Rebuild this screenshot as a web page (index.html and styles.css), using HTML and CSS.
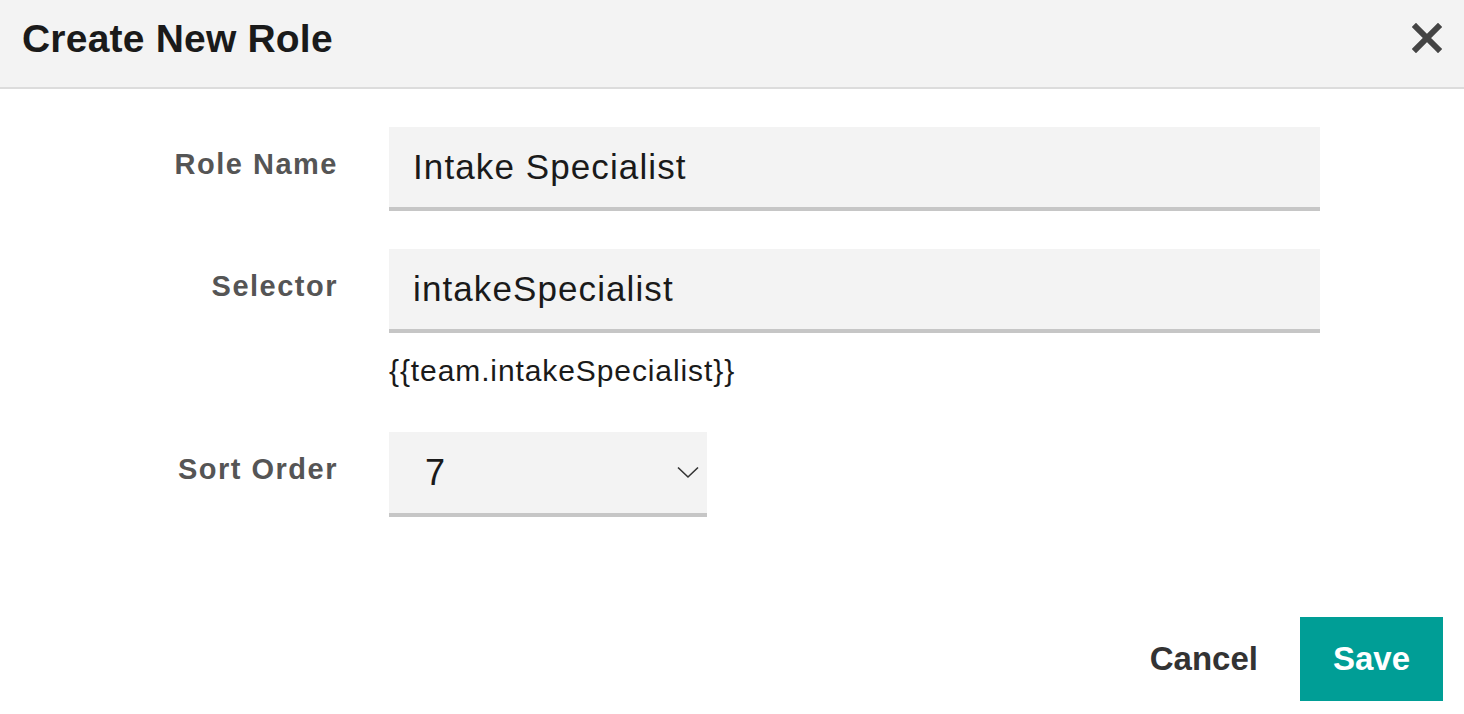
FILE: index.html
```html
<!DOCTYPE html>
<html>
<head>
<meta charset="utf-8">
<link rel="stylesheet" href="styles.css">
</head>
<body>
<div class="dialog">
  <header class="header">
    <h1 class="title">Create New Role</h1>
    <button class="close" aria-label="Close">
      <svg width="30" height="30" viewBox="0 0 30 30"><path d="M4 4 L26 26 M26 4 L4 26" stroke="#444" stroke-width="6" stroke-linecap="square" fill="none"/></svg>
    </button>
  </header>
  <form class="form">
    <label class="label">Role Name</label>
    <div class="field"><input class="input" type="text" value="Intake Specialist"></div>
    <label class="label">Selector</label>
    <div class="field">
      <input class="input" type="text" value="intakeSpecialist">
      <div class="helper">{{team.intakeSpecialist}}</div>
    </div>
    <label class="label">Sort Order</label>
    <div class="field">
      <div class="select">
        <span class="select-value">7</span>
        <svg class="chevron" width="22" height="13" viewBox="0 0 22 13"><path d="M1 1.5 L11 11 L21 1.5" stroke="#333" stroke-width="1.6" fill="none"/></svg>
      </div>
    </div>
  </form>
  <footer class="footer">
    <button class="btn-cancel" type="button">Cancel</button>
    <button class="btn-save" type="button">Save</button>
  </footer>
</div>
</body>
</html>
```
FILE: styles.css
```css
* { box-sizing: border-box; }
html, body { margin: 0; padding: 0; background: #fff; }
body {
  font-family: "Liberation Sans", Arial, Helvetica, sans-serif;
  color: #1a1a1a;
  width: 1464px;
  height: 714px;
  overflow: hidden;
}
.header {
  height: 89px;
  background: #f3f3f3;
  border-bottom: 2px solid #dcdcdc;
  display: flex;
  justify-content: space-between;
  align-items: flex-start;
  padding: 16px 22px 0 22px;
}
.title {
  margin: 0;
  font-size: 39px;
  line-height: 45px;
  font-weight: bold;
  letter-spacing: 0.2px;
  color: #1a1a1a;
}
.close {
  border: 0;
  background: transparent;
  padding: 0;
  margin-top: 7px;
  margin-right: 0;
  width: 30px;
  height: 30px;
  display: block;
  cursor: pointer;
}
.close svg { display: block; }
.form {
  display: grid;
  grid-template-columns: 338px 931px;
  column-gap: 51px;
  row-gap: 38px;
  margin-top: 38px;
}
.label {
  text-align: right;
  font-size: 29px;
  line-height: 36px;
  font-weight: bold;
  color: #555;
  letter-spacing: 1.5px;
  padding-top: 19px;
}
.field { display: flex; flex-direction: column; align-items: flex-start; }
.input {
  width: 931px;
  height: 84px;
  border: 0;
  border-bottom: 4px solid #c6c6c6;
  background: #f3f3f3;
  font-family: "Liberation Sans", Arial, Helvetica, sans-serif;
  font-size: 35px;
  letter-spacing: 1.1px;
  color: #1a1a1a;
  padding: 0 24px;
  margin: 0;
  outline: none;
}
.helper {
  margin-top: 20px;
  margin-bottom: 5px;
  font-size: 30px;
  line-height: 36px;
  letter-spacing: 0.9px;
  color: #1a1a1a;
}
.select {
  width: 318px;
  height: 85px;
  background: #f3f3f3;
  border-bottom: 4px solid #c6c6c6;
  display: flex;
  align-items: center;
  justify-content: space-between;
  padding: 0 8px 0 36px;
}
.select-value { font-size: 36px; color: #1a1a1a; }
.chevron { display: block; }
.footer {
  display: flex;
  justify-content: flex-end;
  align-items: center;
  gap: 42px;
  margin-top: 100px;
  padding-right: 21px;
}
.btn-cancel {
  border: 0;
  background: transparent;
  padding: 0;
  font-family: "Liberation Sans", Arial, Helvetica, sans-serif;
  font-size: 33px;
  font-weight: bold;
  color: #333;
  cursor: pointer;
}
.btn-save {
  border: 0;
  background: #009e96;
  width: 143px;
  height: 84px;
  padding: 0;
  font-family: "Liberation Sans", Arial, Helvetica, sans-serif;
  font-size: 33px;
  font-weight: bold;
  color: #fff;
  cursor: pointer;
}
```
